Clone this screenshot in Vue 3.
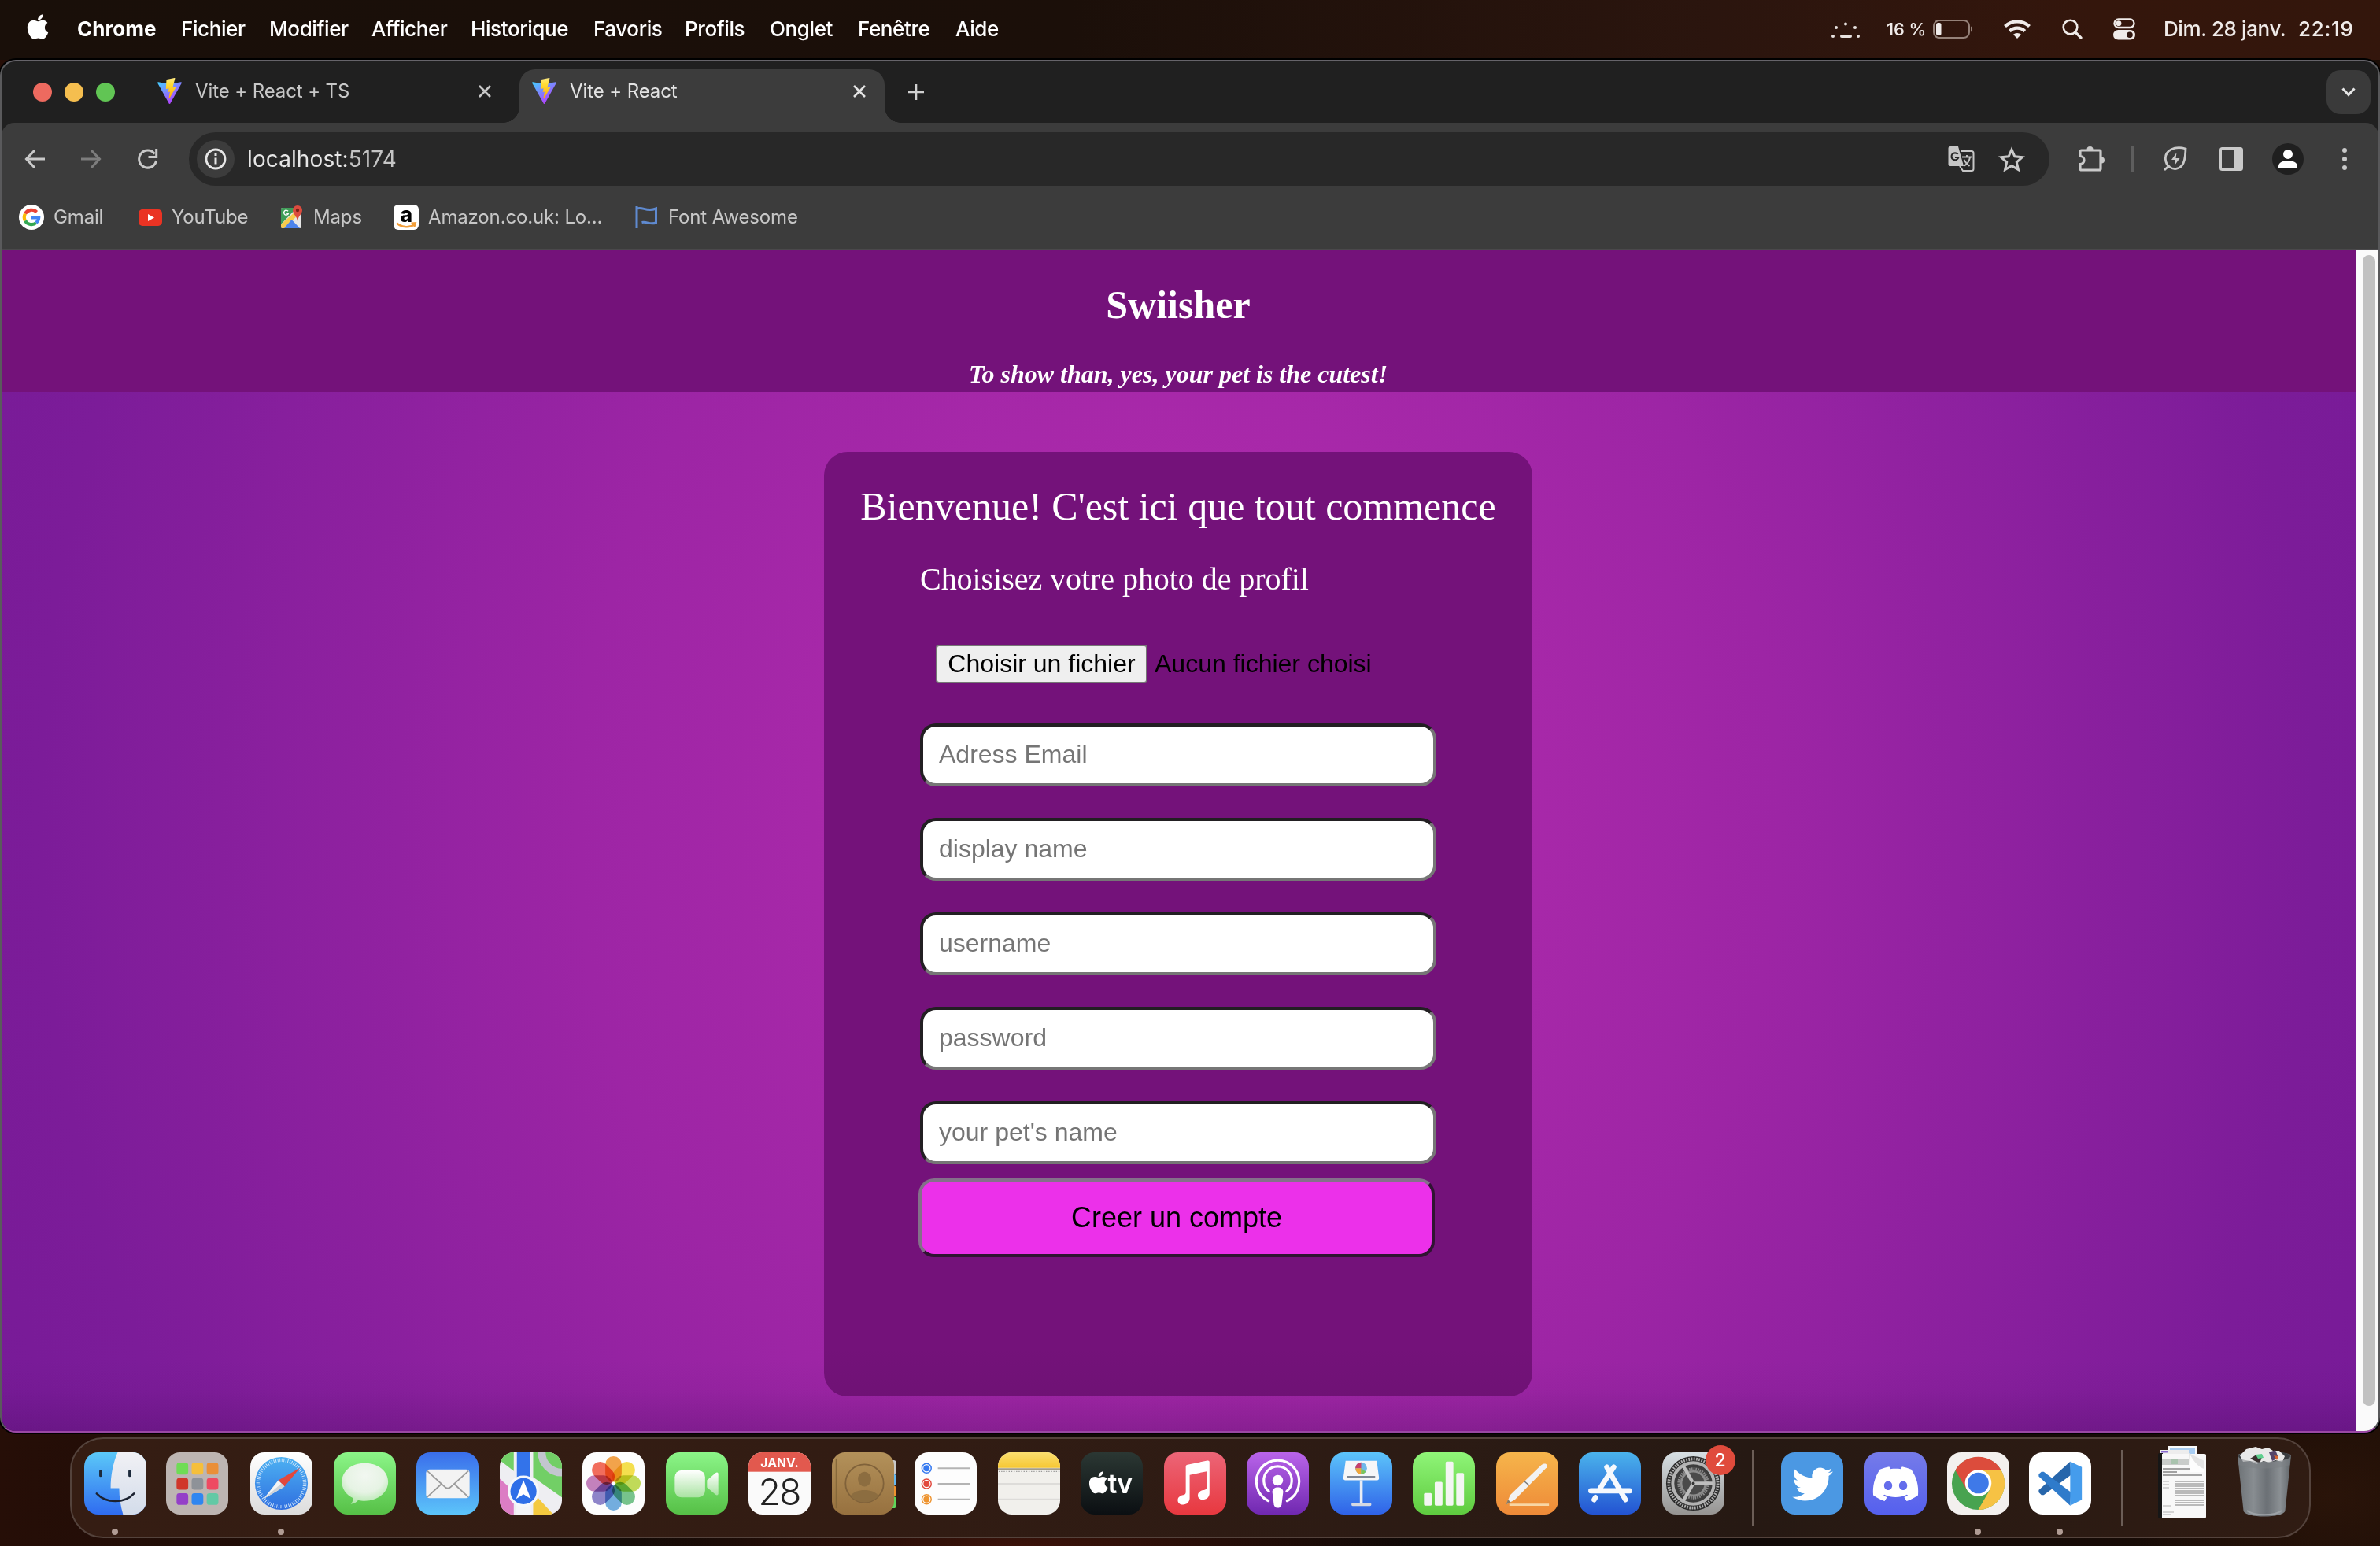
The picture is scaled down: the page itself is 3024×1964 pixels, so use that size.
<script setup>
const menus = [
  { label: 'Chrome', w: 132 },
  { label: 'Fichier', w: 112 },
  { label: 'Modifier', w: 130 },
  { label: 'Afficher', w: 126 },
  { label: 'Historique', w: 156 },
  { label: 'Favoris', w: 116 },
  { label: 'Profils', w: 108 },
  { label: 'Onglet', w: 112 },
  { label: 'Fenêtre', w: 124 },
  { label: 'Aide', w: 60 },
]
const fields = ['Adress Email', 'display name', 'username', 'password', "your pet's name"]
const petals = ['#f0932b', '#f2d92f', '#b5d33c', '#5fb878', '#5b9fd8', '#7a6fc0', '#b86bb0', '#ee5340']
const pads = ['#6fdc55', '#f6bf3a', '#ea8f38', '#d0362a', '#8e9298', '#ee4a62', '#9440c8', '#2f86f0', '#62c9a5']
const docLines = [50, 53, 56, 59, 62, 65, 68, 74, 77, 80]
</script>

<template>
  <div class="desktop">
    <svg class="defs" width="0" height="0">
      <defs>
        <linearGradient id="vite" x1="0" y1="0" x2=".7" y2="1"><stop offset="0" stop-color="#41d1ff" /><stop offset="1" stop-color="#bd34fe" /></linearGradient>
        <linearGradient id="bolt" x1="0" y1="0" x2="0" y2="1"><stop offset="0" stop-color="#ffea83" /><stop offset=".3" stop-color="#ffdd35" /><stop offset="1" stop-color="#ffa800" /></linearGradient>
        <linearGradient id="finder" x1="0" y1="0" x2="0" y2="1"><stop offset="0" stop-color="#5bc8f8" /><stop offset="1" stop-color="#2f6cf0" /></linearGradient>
        <linearGradient id="white" x1="0" y1="0" x2="0" y2="1"><stop offset="0" stop-color="#fff" /><stop offset="1" stop-color="#dcdcdc" /></linearGradient>
        <linearGradient id="face" x1="0" y1="0" x2="0" y2="1"><stop offset="0" stop-color="#f1f1f5" /><stop offset="1" stop-color="#d3dcea" /></linearGradient>
        <linearGradient id="green" x1="0" y1="0" x2="0" y2="1"><stop offset="0" stop-color="#8bf588" /><stop offset="1" stop-color="#56c046" /></linearGradient>
        <linearGradient id="mail" x1="0" y1="0" x2="0" y2="1"><stop offset="0" stop-color="#3a6eeb" /><stop offset="1" stop-color="#5cc4fa" /></linearGradient>
        <linearGradient id="sky" x1="0" y1="0" x2="0" y2="1"><stop offset="0" stop-color="#5cc4fa" /><stop offset="1" stop-color="#2f62e8" /></linearGradient>
        <linearGradient id="compass" x1="0" y1="0" x2="0" y2="1"><stop offset="0" stop-color="#4db1f2" /><stop offset="1" stop-color="#2f6fe0" /></linearGradient>
        <radialGradient id="bubble" cx=".5" cy=".3" r=".7"><stop offset="0" stop-color="#f2f7f1" /><stop offset=".6" stop-color="#e6f3e4" /><stop offset="1" stop-color="#b4e8ae" /></radialGradient>
        <linearGradient id="camera" x1="0" y1="0" x2="0" y2="1"><stop offset="0" stop-color="#fff" /><stop offset="1" stop-color="#a9e3a2" /></linearGradient>
        <linearGradient id="book" x1="0" y1="0" x2="0" y2="1"><stop offset="0" stop-color="#b3915a" /><stop offset="1" stop-color="#97713f" /></linearGradient>
        <linearGradient id="note" x1="0" y1="0" x2="0" y2="1"><stop offset="0" stop-color="#fbdf70" /><stop offset="1" stop-color="#f6c733" /></linearGradient>
        <linearGradient id="tv" x1="0" y1="0" x2="0" y2="1"><stop offset="0" stop-color="#2b3733" /><stop offset="1" stop-color="#0b0f12" /></linearGradient>
        <linearGradient id="music" x1="0" y1="0" x2="0" y2="1"><stop offset="0" stop-color="#ec6577" /><stop offset="1" stop-color="#e8383f" /></linearGradient>
        <linearGradient id="pod" x1="0" y1="0" x2="0" y2="1"><stop offset="0" stop-color="#b964ea" /><stop offset="1" stop-color="#7028b0" /></linearGradient>
        <linearGradient id="num" x1="0" y1="0" x2="0" y2="1"><stop offset="0" stop-color="#8ff578" /><stop offset="1" stop-color="#5fcb3f" /></linearGradient>
        <linearGradient id="pages" x1="0" y1="0" x2="0" y2="1"><stop offset="0" stop-color="#f6b54b" /><stop offset="1" stop-color="#ee8a38" /></linearGradient>
        <linearGradient id="store" x1="0" y1="0" x2="0" y2="1"><stop offset="0" stop-color="#4ab3ec" /><stop offset="1" stop-color="#2353d2" /></linearGradient>
        <linearGradient id="steel" x1="0" y1="0" x2="0" y2="1"><stop offset="0" stop-color="#d7dfe4" /><stop offset="1" stop-color="#969492" /></linearGradient>
        <linearGradient id="disc" x1="0" y1="0" x2="0" y2="1"><stop offset="0" stop-color="#757be9" /><stop offset="1" stop-color="#5560ee" /></linearGradient>
        <linearGradient id="bin" x1="0" y1="0" x2="1" y2="0"><stop offset="0" stop-color="#6d7276" /><stop offset=".3" stop-color="#888d91" /><stop offset=".55" stop-color="#6b7075" /><stop offset=".8" stop-color="#8b9094" /><stop offset="1" stop-color="#5f6468" /></linearGradient>
        <clipPath id="tile"><rect x="0" y="0" width="80" height="80" rx="18" /></clipPath>
        <symbol id="viteLogo" viewBox="0 0 32 32"><path d="M31 6 17 31a1 1 0 0 1-2 0L1 6a1 1 0 0 1 1-1l14 2.500 14-2.500a1 1 0 0 1 1 1z" fill="url(#vite)" /><path d="M22 0 12.500 2a.6.6 0 0 0-.4.500L11.500 13a.5.5 0 0 0 .6.500l3-.6-.9 4.500 2.300-.5-1.500 8c-.1.5.6.8.8.3L23.500 12a.5.5 0 0 0-.5-.7l-3.200.6L22.700.6A.5.5 0 0 0 22 0z" fill="url(#bolt)" /></symbol>
        <symbol id="cross" viewBox="0 0 16 16"><path d="M1 1 15 15M15 1 1 15" stroke="currentColor" stroke-width="2.600" /></symbol>
        <symbol id="apple" viewBox="0 0 384 512"><path fill="#fff" d="M318.700 268.700c-.2-36.700 16.400-64.400 50-84.800-18.800-26.900-47.200-41.700-84.700-44.600-35.500-2.800-74.300 20.700-88.500 20.700-15 0-49.400-19.700-76.400-19.700C63.300 141.200 4 184.800 4 273.500q0 39.300 14.400 81.200c12.800 36.700 59 126.700 107.200 125.200 25.200-.6 43-17.900 75.800-17.900 31.800 0 48.300 17.900 76.400 17.900 48.600-.7 90.400-82.500 102.600-119.300-65.200-30.700-61.700-90-61.700-91.900zm-56.600-164.200c27.300-32.400 24.800-61.900 24-72.500-24.100 1.400-52 16.400-67.900 34.900-17.500 19.800-27.800 44.300-25.600 71.900 26.100 2 49.900-11.400 69.500-34.300z" /></symbol>
      </defs>
    </svg>

    <header class="menubar">
      <svg class="apple" width="32" height="34" viewBox="0 0 32 34"><use href="#apple" x="2" y="-1" width="28" height="36" /></svg>
      <nav class="menus">
        <span v-for="(m, i) in menus" :key="m.label" class="menu" :class="{ strong: i === 0 }" :style="{ width: m.w + 'px' }">{{ m.label }}</span>
      </nav>
      <div class="status">
        <svg class="st-dots" width="38" height="22" viewBox="0 0 38 22" fill="#e8e2df"><circle cx="3" cy="18" r="2" /><circle cx="35" cy="18" r="2" /><circle cx="7" cy="7" r="2" /><circle cx="31" cy="7" r="2" /><circle cx="19" cy="2.500" r="2" /><rect x="12" y="16" width="15" height="4" rx="2" /></svg>
        <span class="pct">16 %</span>
        <svg class="st-bat" width="52" height="24" viewBox="0 0 52 24"><rect x="1" y="1" width="45" height="22" rx="7" fill="none" stroke="#958279" stroke-width="2" /><rect x="4" y="4" width="6.500" height="16" rx="2.500" fill="#f0ecea" /><path d="M48 8.500c2.500 1 2.500 6 0 7z" fill="#958279" /></svg>
        <svg class="st-wifi" width="34" height="26" viewBox="0 0 34 26" fill="none" stroke="#f0ebe9" stroke-width="4.300"><path d="M1.500 9.500a22.500 22.500 0 0 1 31 0" /><path d="M7.300 15.600a14 14 0 0 1 19.400 0" /><path d="M17 25l-5-5.200a7.500 7.500 0 0 1 10 0z" fill="#f0ebe9" stroke="none" /></svg>
        <svg class="st-find" width="26" height="26" viewBox="0 0 26 26" fill="none" stroke="#f0ebe9" stroke-width="2.600"><circle cx="10.500" cy="10.500" r="8.800" /><path d="M17 17l7 7" stroke-width="3.200" stroke-linecap="round" /></svg>
        <svg class="st-cc" width="28" height="28" viewBox="0 0 28 28"><rect x="1.500" y="1.500" width="25" height="10.500" rx="5.250" fill="none" stroke="#f0ebe9" stroke-width="2.400" /><circle cx="7" cy="6.700" r="3.400" fill="#f0ebe9" /><rect x="0" y="15" width="28" height="12.500" rx="6.250" fill="#f0ebe9" /><circle cx="21" cy="21.200" r="3.800" fill="#2f150d" /></svg>
        <span class="date">Dim. 28 janv.</span><span class="time">22:19</span>
      </div>
    </header>

    <main class="window">
      <div class="tabstrip">
        <div class="lights"><i class="r"></i><i class="y"></i><i class="g"></i></div>
        <div class="tab">
          <svg width="33" height="33"><use href="#viteLogo" /></svg>
          <span class="tabname">Vite + React + TS</span>
          <svg class="x" width="16" height="16"><use href="#cross" /></svg>
        </div>
        <div class="tab on">
          <svg width="33" height="33"><use href="#viteLogo" /></svg>
          <span class="tabname">Vite + React</span>
          <svg class="x" width="16" height="16"><use href="#cross" /></svg>
        </div>
        <svg class="plus" width="22" height="22" viewBox="0 0 22 22"><path d="M11 1v20M1 11h20" stroke="#d0d0d0" stroke-width="2.600" /></svg>
        <div class="drop"><svg width="18" height="12" viewBox="0 0 18 12"><path d="M1.500 1.500 9 9.500l7.500-8" fill="none" stroke="#e6e6e6" stroke-width="3" /></svg></div>
      </div>

      <div class="toolbar">
        <div class="nav">
          <svg width="26" height="24" viewBox="0 0 26 24"><path d="M13 1 2.500 12 13 23M3 12h23" fill="none" stroke="#c9c9c9" stroke-width="3" /></svg>
          <svg class="fwd" width="26" height="24" viewBox="0 0 26 24"><path d="M13 1l10.500 11L13 23M23 12H0" fill="none" stroke="#7d7d7d" stroke-width="3" /></svg>
          <svg class="rel" width="28" height="26" viewBox="0 0 28 26"><path d="M22.500 6.500a11 11 0 1 0 2 8.500" fill="none" stroke="#c9c9c9" stroke-width="3" /><path d="M24.700 0v10.500H14.500" fill="none" stroke="#c9c9c9" stroke-width="3" /></svg>
        </div>
        <div class="omni">
          <span class="info"><svg width="28" height="28" viewBox="0 0 28 28"><circle cx="14" cy="14" r="12" fill="none" stroke="#e6e6e6" stroke-width="2.800" /><path d="M14 12.500v8M14 7v3" stroke="#e6e6e6" stroke-width="3" /></svg></span>
          <span class="url">localhost:<em>5174</em></span>
          <svg class="tr" width="34" height="34" viewBox="0 0 34 34"><path d="M17 7h13a2.500 2.500 0 0 1 2.500 2.500v20A2.500 2.500 0 0 1 30 32H19l-4-6" fill="none" stroke="#c6c6c6" stroke-width="2" /><path d="M3 1h10l7 25H3a2.500 2.500 0 0 1-2.500-2.500V3.500A2.500 2.500 0 0 1 3 1z" fill="#c6c6c6" /><path d="M12.500 11A4.500 4.500 0 1 0 13.300 15H9" fill="none" stroke="#282828" stroke-width="2.200" /><path d="M18 14.500h12M24 12v2.500M28 15c-1 5-4 9-8 11M20.500 18c1.500 3 4 6 7 8" fill="none" stroke="#c6c6c6" stroke-width="1.900" /></svg>
          <svg class="star" width="34" height="32" viewBox="0 0 34 32"><path d="M17 4l3.900 8.800 9.600.9-7.200 6.400 2.100 9.400L17 24.600l-8.400 4.900 2.100-9.400-7.200-6.400 9.600-.9z" fill="none" stroke="#c9c9c9" stroke-width="3" /></svg>
        </div>
        <div class="tools">
          <svg class="t1" width="34" height="34" viewBox="0 0 34 34"><path d="M4.500 6h23a1.500 1.500 0 0 1 1.500 1.500v22a1.500 1.500 0 0 1-1.500 1.500h-23A1.500 1.500 0 0 1 3 29.500v-6a5 5 0 0 0 0-10v-6A1.500 1.500 0 0 1 4.500 6z" fill="none" stroke="#c9c9c9" stroke-width="3.200" /><path d="M11.500 5a4 4 0 0 1 8 0zM30 14.500a4 4 0 0 1 0 8z" fill="#c9c9c9" /></svg>
          <i class="tsep"></i>
          <svg class="t2" width="32" height="32" viewBox="0 0 32 32"><path d="M29 3C15-1 2 5 3.500 17c.5 5 3.500 8 5 9 5 4 12 3 16-2 4.500-6 4-14 4.500-21zM8.500 24 2 30" fill="none" stroke="#c9c9c9" stroke-width="2.800" /><path d="M17.500 8 11 17h5l-1 7 6.500-9h-5z" fill="#c9c9c9" /></svg>
          <svg class="t3" width="30" height="30" viewBox="0 0 30 30"><rect x="1.500" y="1.500" width="27" height="27" rx="2" fill="none" stroke="#c9c9c9" stroke-width="3" /><path d="M18 1h9a2 2 0 0 1 2 2v24a2 2 0 0 1-2 2h-9z" fill="#c9c9c9" /></svg>
          <svg class="t4" width="40" height="40" viewBox="0 0 40 40"><circle cx="20" cy="20" r="20" fill="#1f1f1f" /><circle cx="20" cy="14" r="6" fill="#fff" /><path d="M8 32v-3c0-4.500 6-7 12-7s12 2.500 12 7v3z" fill="#fff" /></svg>
          <svg class="t5" width="8" height="30" viewBox="0 0 8 30" fill="#c9c9c9"><circle cx="4" cy="4" r="3" /><circle cx="4" cy="15" r="3" /><circle cx="4" cy="26" r="3" /></svg>
        </div>
      </div>

      <div class="bookmarks">
        <div class="bm b1">
          <svg width="32" height="32" viewBox="0 0 32 32"><circle cx="16" cy="16" r="16" fill="#fff" /><g fill="none" stroke-width="4.200"><path d="M8 11.500A9.300 9.300 0 0 1 22.600 9.400" stroke="#ea4335" /><path d="M8 20.500a9.300 9.300 0 0 1 0-9" stroke="#fbbc05" /><path d="M22 23a9.300 9.300 0 0 1-14-2.500" stroke="#34a853" /><path d="M16 16.500h9.200A9.300 9.300 0 0 1 22 23" stroke="#4285f4" /></g></svg>
          <span>Gmail</span>
        </div>
        <div class="bm b2">
          <svg width="30" height="32" viewBox="0 0 30 32"><rect x="0" y="6" width="30" height="21" rx="5" fill="#ea3323" /><path d="M12 12l8 4.500-8 4.500z" fill="#fff" /></svg>
          <span>YouTube</span>
        </div>
        <div class="bm b3">
          <svg width="30" height="32" viewBox="0 0 30 32"><rect x="1" y="4" width="26" height="26" rx="2" fill="#e6e6e6" /><path d="M1 6a2 2 0 0 1 2-2h18L1 25z" fill="#3f9d58" /><path d="M1 25 20 8l4 4L5 30H3a2 2 0 0 1-2-2z" fill="#f7cb4d" /><path d="M5 30 14.500 19 25 30z" fill="#4c83ec" /><path d="M22 1a6 6 0 0 1 6 6c0 5-5 7-6 14-1-7-6-9-6-14a6 6 0 0 1 6-6z" fill="#dc4b3e" /><circle cx="22" cy="7" r="2.200" fill="#7c2118" /><path d="M10 8.300a3 3 0 1 0 .5 2.700H8" fill="none" stroke="#fff" stroke-width="1.400" /></svg>
          <span>Maps</span>
        </div>
        <div class="bm b4">
          <span class="amz">a<svg width="32" height="32" viewBox="0 0 32 32"><path d="M4 23.500c7 6 17 6 23 1.500" fill="none" stroke="#f19d38" stroke-width="2.600" /><path d="M22.500 23.500l5.500-.3-1.500 5" fill="none" stroke="#f19d38" stroke-width="2" /></svg></span>
          <span>Amazon.co.uk: Lo...</span>
        </div>
        <div class="bm b5">
          <svg width="30" height="32" viewBox="0 0 30 32"><path d="M2 2v28M2 5c8-3 12 5 24.500 0v18c-8 3-11-2-18-.5" fill="none" stroke="#5f8ad0" stroke-width="3" /></svg>
          <span>Font Awesome</span>
        </div>
      </div>

      <div class="viewport">
        <div class="page">
          <header class="site">
            <h2>Swiisher</h2>
            <p>To show than, yes, your pet is the cutest!</p>
          </header>
          <section class="card">
            <h1>Bienvenue! C'est ici que tout commence</h1>
            <div class="form">
              <label class="photo">Choisisez votre photo de profil</label>
              <div class="file"><button class="pick">Choisir un fichier</button><span>Aucun fichier choisi</span></div>
              <input v-for="f in fields" :key="f" class="field" :placeholder="f" />
              <button class="submit">Creer un compte</button>
            </div>
          </section>
        </div>
        <div class="scroll"><i></i></div>
      </div>
    </main>

    <footer class="dock">
      <div class="app run"><svg viewBox="0 0 80 80"><g clip-path="url(#tile)"><rect width="80" height="80" fill="url(#finder)" /><path d="M43 0C37 14 34 30 34 46h11c0 12 2 24 5 34h30V0z" fill="url(#face)" /></g><path d="M21 24v6M58.500 24v6" stroke="#1c2a3c" stroke-width="3.400" stroke-linecap="round" /><path d="M16 53c12 13 36 13 48 0" fill="none" stroke="#1c2230" stroke-width="2.600" stroke-linecap="round" /></svg></div>
      <div class="app pad"><svg viewBox="0 0 80 80"><rect width="80" height="80" rx="18" fill="#bdb5b2" /><rect v-for="(c, i) in pads" :key="i" :x="13.500 + (i % 3) * 19.400" :y="13.500 + Math.floor(i / 3) * 19.600" width="15" height="15" rx="3.500" :fill="c" /></svg></div>
      <div class="app run"><svg viewBox="0 0 80 80"><rect width="80" height="80" rx="18" fill="url(#white)" /><circle cx="40" cy="40" r="34" fill="url(#compass)" /><circle cx="40" cy="40" r="30" fill="none" stroke="#d9ecfb" stroke-width="4.500" stroke-dasharray=".9 1.720" /><path d="M64 20 44 44l-8-8z" fill="#e2483d" /><path d="M17 60 36 36l8 8z" fill="#f4f4f4" /><path d="M17 60 44 44l-4-4z" fill="#cfd3d8" /></svg></div>
      <div class="app"><svg viewBox="0 0 80 80"><rect width="80" height="80" rx="18" fill="url(#green)" /><path d="M40 14c17 0 30 10.500 30 24S57 62.500 40 62.500c-3.500 0-6-.3-8.500-1-2 2.500-5 4.500-9.500 5 2-2 3-4.500 3-7.500C16 54.500 10.500 47.500 10.500 38 10.500 24.500 23 14 40 14z" fill="url(#bubble)" /></svg></div>
      <div class="app"><svg viewBox="0 0 80 80"><rect width="80" height="80" rx="18" fill="url(#mail)" /><rect x="12.500" y="22" width="56" height="37" rx="4.500" fill="#f3f3f3" /><path d="M14 57.500 33 40M67 57.500 48 40M14 24l22 20c3 3 6 3 9 0l22-20" fill="none" stroke="#9b9b9b" stroke-width="1.800" /></svg></div>
      <div class="app"><svg viewBox="0 0 80 80"><g clip-path="url(#tile)"><rect width="80" height="80" fill="#eeeef2" /><path d="M0 0h18v24L0 10z" fill="#72cf66" /><path d="M43 0h37v58L43 32z" fill="#72cf66" /><path d="M0 34l18 16v30H0z" fill="#dc7dc4" /><path d="M43 52l26 28H43z" fill="#f4c93f" /><circle cx="80" cy="0" r="26" fill="none" stroke="#c3c6cf" stroke-width="10" /><path d="M21 0h19v80H21z" fill="#f4f4f7" /><path d="M22 0h17v40H22z" fill="#3373ea" /></g><circle cx="30.500" cy="50" r="18.500" fill="#2f6fe8" stroke="#f5f7fb" stroke-width="3.400" /><path d="M30.500 36 40 60l-9.500-6-9.500 6z" fill="#fff" /></svg></div>
      <div class="app"><svg viewBox="0 0 80 80"><rect width="80" height="80" rx="18" fill="#fdfdfd" /><g class="petals"><rect v-for="(c, i) in petals" :key="i" x="29.500" y="5" width="21" height="33" rx="10.500" :fill="c" fill-opacity=".85" :transform="`rotate(${i * 45} 40 40)`" /></g></svg></div>
      <div class="app"><svg viewBox="0 0 80 80"><rect width="80" height="80" rx="18" fill="url(#green)" /><rect x="11.500" y="23" width="39" height="35" rx="9" fill="url(#camera)" /><path d="M53 36 64 26.500c2-1.500 3.500-.5 3.500 1.500v25c0 2-1.500 3-3.500 1.500L53 45z" fill="url(#camera)" /></svg></div>
      <div class="app"><svg viewBox="0 0 80 80"><g clip-path="url(#tile)"><rect width="80" height="80" fill="#fafafa" /><rect width="80" height="25" fill="#e2594e" /></g><text x="40" y="19.500" text-anchor="middle" class="cal-m">JANV.</text><text x="39.500" y="68" text-anchor="middle" class="cal-d">28</text></svg></div>
      <div class="app"><svg viewBox="0 0 80 80"><rect x="70" y="10" width="12.500" height="18" rx="3" fill="#c9c9c9" /><rect x="70" y="28" width="12.500" height="15" rx="3" fill="#67b9f0" /><rect x="70" y="43" width="12.500" height="14" rx="3" fill="#f0932f" /><rect x="70" y="57" width="12.500" height="15" rx="3" fill="#5fd65a" /><rect width="80" height="80" rx="17" fill="url(#book)" /><path d="M5.500 8v64" stroke="#86683a" stroke-width="1.500" /><circle cx="42" cy="40" r="24.500" fill="none" stroke="#80623a" stroke-width="1.800" /><ellipse cx="42" cy="34.500" rx="8.500" ry="9.500" fill="#8c6d40" /><path d="M24 56c6-10 30-10 36 0-8 11-28 11-36 0z" fill="#8c6d40" /></svg></div>
      <div class="app"><svg viewBox="0 0 80 80"><rect width="80" height="80" rx="18" fill="#fdfdfd" /><g v-for="(c, i) in ['#3478f0', '#e2483d', '#ee9430']" :key="c"><circle cx="15.500" :cy="20.500 + i * 20" r="6" fill="none" :stroke="c" stroke-width="1.500" /><circle cx="15.500" :cy="20.500 + i * 20" r="4" :fill="c" /><path :d="`M30 ${20.500 + i * 20}h41`" stroke="#b4b4b4" stroke-width="1.800" /></g></svg></div>
      <div class="app"><svg viewBox="0 0 80 80"><g clip-path="url(#tile)"><rect width="80" height="80" fill="#f1f0ec" /><rect width="80" height="20" fill="url(#note)" /><path d="M0 21.500h80" stroke="#a39c88" stroke-width="2" /><path d="M1 24.700h79" stroke="#9b9b9b" stroke-width="1.400" stroke-dasharray="1.400 1.800" /><path d="M0 40.500h80M0 60.500h80" stroke="#dddcd9" stroke-width="1.800" /></g></svg></div>
      <div class="app"><svg viewBox="0 0 80 80"><rect width="80" height="80" rx="18" fill="url(#tv)" /><use href="#apple" x="10.500" y="22.500" width="25" height="32.500" /><text x="35" y="53" class="tv">tv</text></svg></div>
      <div class="app"><svg viewBox="0 0 80 80"><rect width="80" height="80" rx="18" fill="url(#music)" /><path d="M28 18.500c0-1.500 1-2.300 2.200-2.600l25.500-5.200c1.800-.3 2.800.4 2.800 2v40c0 5-4 8.300-8.500 8.300-4 0-6.500-2.300-6.500-5.500 0-4 3-6 7-6.800 3.500-.8 4.500-1.500 4.500-4V24.500L33 29v30c0 5-4 8.300-8.500 8.300-4 0-6.800-2.300-6.800-5.600 0-4 3-6 7-6.800 2.500-.6 3.300-1.400 3.300-4z" fill="#fff" /></svg></div>
      <div class="app"><svg viewBox="0 0 80 80"><rect width="80" height="80" rx="18" fill="url(#pod)" /><circle cx="40" cy="36" r="6.800" fill="#fff" /><path d="M33 51c0-8 14-8 14 0l-2 16c-1 6-9 6-10 0z" fill="#fff" /><path d="M28.500 50a18 18 0 1 1 23 0M28 62.500a27.500 27.500 0 1 1 24 0" fill="none" stroke="#fff" stroke-width="3.200" stroke-linecap="round" /></svg></div>
      <div class="app"><svg viewBox="0 0 80 80"><rect width="80" height="80" rx="18" fill="url(#sky)" /><rect x="38.300" y="36" width="3.600" height="31" fill="#e9edf4" /><rect x="27.500" y="65" width="25.500" height="4.200" rx="1.500" fill="#d5d9e2" /><path d="M20 11h40l3 22c0 2-1 3-2.500 3h-41C18 36 17 35 17 33z" fill="#f5f6f8" /><path d="M22 31.300h36" stroke="#7f8795" stroke-width="2" /><circle cx="40" cy="20.500" r="7.500" fill="#6fb8ea" /><path d="M40 20.500V13a7.500 7.500 0 0 0-7.500 7.500z" fill="#c8416b" /><path d="M40 20.500h-7.500A7.500 7.500 0 0 0 40 28z" fill="#f0a63c" /><path d="M40 20.500V28a7.500 7.500 0 0 0 6-3z" fill="#7bc65a" /></svg></div>
      <div class="app"><svg viewBox="0 0 80 80"><rect width="80" height="80" rx="18" fill="url(#num)" /><g fill="#f3f6f2"><rect x="14.500" y="52.500" width="10" height="16" rx="1.600" /><rect x="28.300" y="38" width="10" height="30.500" rx="1.600" /><rect x="42.300" y="12" width="10" height="56.500" rx="1.600" /><rect x="56" y="26.500" width="10" height="42" rx="1.600" /></g></svg></div>
      <div class="app"><svg viewBox="0 0 80 80"><rect width="80" height="80" rx="18" fill="url(#pages)" /><path d="M17 67.500h51" stroke="#f8d6a5" stroke-width="2.600" /><path d="M13 67l5-12L58 16.500c4-3.500 9-2 7 3L24 61z" fill="#f2f2f2" /><path d="M36.500 37.500l6 5" stroke="#777" stroke-width="1.500" /><path d="M13 67l2-6 4 3z" fill="#8a7a62" /></svg></div>
      <div class="app"><svg viewBox="0 0 80 80"><rect width="80" height="80" rx="18" fill="url(#store)" /><g stroke="#f6f9fd" stroke-width="6.600" stroke-linecap="round"><path d="M45 19 27.500 46M36 19l24 42M15.500 49.500h50M21.500 58l-1.800 3" /></g></svg></div>
      <div class="app"><svg viewBox="0 0 80 80"><rect width="80" height="80" rx="18" fill="url(#steel)" /><circle cx="40" cy="40" r="35" fill="#2a2a2a" /><circle cx="40" cy="40" r="31.500" fill="none" stroke="#aeaeae" stroke-width="4" stroke-dasharray="1.800 1.500" /><circle cx="40" cy="40" r="26.500" fill="#3d3d3d" stroke="#b4b4b4" stroke-width="4" /><circle cx="40" cy="40" r="18.500" fill="#555" stroke="#8c8c8c" stroke-width="4" stroke-dasharray="1.600 1.200" /><circle cx="40" cy="40" r="15.500" fill="#4a4a4a" stroke="#8c8c8c" stroke-width="2.500" /><path d="M40 40h26M40 40 27 17.500M40 40 27 62.500" stroke="#bdbdbd" stroke-width="4.400" /><circle cx="40" cy="40" r="2" fill="#333" /></svg><b class="badge">2</b></div>
      <i class="dsep s1"></i>
      <div class="app"><svg viewBox="0 0 80 80"><rect width="80" height="80" rx="18" fill="#4b98e3" /><g transform="translate(14.500 15) scale(2.170)"><path fill="#fff" d="M23.953 4.570a10 10 0 01-2.825.775 4.958 4.958 0 002.163-2.723c-.951.555-2.005.959-3.127 1.184a4.920 4.920 0 00-8.384 4.482C7.690 8.095 4.067 6.130 1.640 3.162a4.822 4.822 0 00-.666 2.475c0 1.710.870 3.213 2.188 4.096a4.904 4.904 0 01-2.228-.616v.060a4.923 4.923 0 003.946 4.827 4.996 4.996 0 01-2.212.085 4.936 4.936 0 004.604 3.417 9.867 9.867 0 01-6.102 2.105c-.390 0-.779-.023-1.170-.067a13.995 13.995 0 007.557 2.209c9.053 0 13.998-7.496 13.998-13.985 0-.210 0-.420-.015-.630A9.935 9.935 0 0024 4.590z" /></g></svg></div>
      <div class="app"><svg viewBox="0 0 80 80"><rect width="80" height="80" rx="18" fill="url(#disc)" /><g transform="translate(11 11.500) scale(2.420)"><path fill="#fff" d="M20.317 4.370a19.791 19.791 0 00-4.885-1.515c-.3.400-.5.900-.687 1.287-1.845-.276-3.680-.276-5.487 0-.2-.45-.4-.9-.696-1.287a19.736 19.736 0 00-4.917 1.543C.533 9.046-.319 13.580.099 18.058c2.084 1.564 4.072 2.479 6.024 3.085.5-.65.950-1.350 1.310-2.022-.7-.3-1.350-.6-1.914-.998l.450-.4c3.928 1.793 8.180 1.793 12.061 0l.450.4c-.6.400-1.250.7-1.920.998.4.750.8 1.400 1.309 2.022 1.961-.607 3.950-1.522 6.034-3.085.5-5.177-.838-9.674-3.586-13.688zM8.020 15.331c-1.183 0-2.157-1.086-2.157-2.419s.956-2.419 2.157-2.419c1.211 0 2.176 1.095 2.157 2.419 0 1.333-.956 2.419-2.157 2.419zm7.975 0c-1.183 0-2.157-1.086-2.157-2.419s.955-2.419 2.157-2.419c1.211 0 2.176 1.095 2.157 2.419 0 1.333-.946 2.419-2.157 2.419z" /></g></svg></div>
      <div class="app run"><svg viewBox="0 0 80 80"><rect width="80" height="80" rx="18" fill="#f3f0ee" /><circle cx="40" cy="40" r="34" fill="#48a350" /><path d="M10.500 23A34 34 0 0 1 69.500 23H40L25.500 48.500z" fill="#dc4c3c" /><path d="M40 23h29.500A34 34 0 0 1 40 74l14.700-25.500z" fill="#f6c244" /><circle cx="40" cy="39.500" r="17" fill="#fff" /><circle cx="40" cy="39.500" r="13.500" fill="#3f79e8" /></svg></div>
      <div class="app run code"><svg viewBox="0 0 80 80"><rect width="80" height="80" rx="18" fill="#fff" /><path d="M53 12 12.500 48.500v3l3.500 3.500h3L54 29z" fill="#2766ab" /><path d="M12.500 28v3L53 68.500l1-17L19 25h-3z" fill="#2f7bcb" /><path d="M53 12 68 19v42L53 68.500z" fill="#459cec" /></svg></div>
      <i class="dsep s2"></i>
      <div class="app docs"><svg viewBox="0 0 64 92"><rect x="13" y="0" width="38" height="20" fill="#fafafa" /><rect x="16" y="3" width="32" height="9" fill="#a9cdf2" /><rect x="4" y="5" width="36" height="20" fill="#ededed" /><rect x="5" y="6" width="8" height="2.500" fill="#8a6ad0" /><path d="M1 11a2 2 0 0 1 2-2h4v83H3a2 2 0 0 1-2-2z" fill="#161616" /><path d="M6 10h54a2 2 0 0 1 2 2v78a2 2 0 0 1-2 2H6z" fill="#f8f8f8" /><rect x="6" y="16" width="34" height="8" fill="#c9ccca" /><rect x="17" y="17" width="9" height="6" fill="#a9c3ae" /><path d="M7 29h36M7 33h18M7 37h50" stroke="#858585" stroke-width="1.500" /><path v-for="y in docLines" :key="y" :d="`M22 ${y - 5}h37`" stroke="#a6a6a6" stroke-width="1.500" /><path d="M7 45h8M7 49h8M7 53h8M7 76h10M7 84h14M7 87h10" stroke="#b0b0b0" stroke-width="1.200" /><path d="M40 9c0 8 2 16 1 24h19V19z" fill="#e4e4e4" /><path d="M41 33h19V29c-8-2-14-10-19-19z" fill="#fdfdfd" /></svg></div>
      <div class="app bin"><svg viewBox="0 0 72 92"><path d="M2 12C2 6 70 6 70 12l-7.500 70c-1 10-52 10-53 0z" fill="url(#bin)" /><ellipse cx="36" cy="13" rx="33" ry="7" fill="#3a3d40" /><path d="M5 12l8-8 12-3 8 3 8-2 6 4 8 0 7 7-3 7-9-2-8 3-7-2-9 4-8-4-9 1z" fill="#e9e9e9" /><path d="M18 16l8-5 7 3-3 8z" fill="#3a3030" /><path d="M25 11l8-1 2 5-7 1z" fill="#5ecf8e" /><path d="M42 8l8-3 4 10-8 4z" fill="#56456a" /><path d="M48 12l6 1-2 5z" fill="#d9642f" /><path d="M2.500 14c8 8 59 8 67 0l-1 10c-15 6-50 6-65 0z" fill="#7b8084" fill-opacity=".5" /><path d="M14 82c8 7 36 7 44 0" fill="none" stroke="#9da2a6" stroke-width="2" /></svg></div>
    </footer>
  </div>
</template>

<style>
html, body { margin: 0; overflow: hidden; }
</style>

<style scoped>
.desktop { width: 3024px; height: 1964px; display: flex; flex-direction: column; overflow: hidden; font-family: Inter, "Liberation Sans", sans-serif;
  background: radial-gradient(260px 160px at 2960px 1900px, #2a1409, transparent), radial-gradient(500px 60px at 1300px 1964px, #3c130a, transparent), linear-gradient(90deg, #260e07, #120a06 30%, #0e0806 70%, #1c0d06); }
.defs { position: absolute; }
svg { display: block; flex: none; }
i { display: block; flex: none; }

.menubar { height: 76px; box-sizing: border-box; padding-bottom: 3px; flex: none; display: flex; align-items: center; color: #fff; font-size: 26px; background: linear-gradient(90deg, #190f09, #1b0f09 45%, #2b150e 72%, #34160c 88%, #33160c); }
.apple { margin-left: 32px; margin-top: -5px; }
.menus { display: flex; margin-left: 34px; font-weight: 500; letter-spacing: -0.4px; }
.menu { white-space: nowrap; flex: none; }
.menu.strong { font-weight: 700; letter-spacing: 0; }
.status { display: flex; align-items: center; margin-left: auto; padding-right: 30px; color: #f0ebe9; font-weight: 500; white-space: nowrap; }
.pct { font-size: 22px; width: 54px; margin-left: 33px; letter-spacing: -.1px; }
.st-dots { margin-top: 4px; }
.st-bat { margin-left: 5px; }
.st-wifi { margin-left: 38px; }
.st-find { margin-left: 40px; }
.st-cc { margin-left: 39px; }
.date { width: 171px; margin-left: 36px; letter-spacing: -.4px; }
.time { width: 74px; letter-spacing: .7px; }

.window { height: 1744px; box-sizing: border-box; flex: none; display: flex; flex-direction: column; border: 2px solid #66646a; border-right-color: #58585a; border-left-color: #5a5a5c; border-bottom-color: #9a48a4; border-radius: 20px; overflow: hidden; background: #202020; box-shadow: 0 0 0 2px #000; }
.tabstrip { height: 78px; flex: none; display: flex; align-items: center; }
.lights { display: flex; gap: 16px; margin-left: 40px; width: 154px; }
.lights i { width: 24px; height: 24px; border-radius: 50%; }
.r { background: #ed6a5f; } .y { background: #f5be4f; } .g { background: #61c554; }
.tab { height: 68px; margin-top: 10px; width: 464px; box-sizing: border-box; padding-left: 3px; display: flex; align-items: center; color: #c7c7c7; font-size: 24px; padding-bottom: 13px; }
.tab.on { background: #3c3c3c; border-radius: 20px 20px 0 0; color: #e3e3e3; margin-left: 0; padding-left: 15px; position: relative; }
.tab.on::before, .tab.on::after { content: ""; position: absolute; bottom: 0; width: 20px; height: 20px; }
.tab.on::before { left: -20px; background: radial-gradient(circle at 0 0, transparent 19.500px, #3c3c3c 20px); }
.tab.on::after { right: -20px; background: radial-gradient(circle at 100% 0, transparent 19.500px, #3c3c3c 20px); }
.tabname { margin-left: 16px; flex: 1; white-space: nowrap; letter-spacing: -.1px; }
.x { margin-right: 36px; }
.tab.on .x { margin-right: 24px; }
.plus { margin-left: 29px; }
.drop { margin-left: auto; margin-right: 10px; width: 56px; height: 56px; border-radius: 18px; background: #3a3a3a; display: flex; align-items: center; justify-content: center; }

.toolbar { height: 92px; flex: none; background: #3c3c3c; border-radius: 16px 16px 0 0; display: flex; align-items: center; }
.nav { width: 238px; display: flex; align-items: center; box-sizing: border-box; padding-left: 29px; }
.fwd { margin-left: 46px; } .rel { margin-left: 45px; }
.omni { width: 2364px; height: 68px; border-radius: 34px; background: #282828; display: flex; align-items: center; }
.info { width: 48px; height: 48px; margin-left: 10px; border-radius: 50%; background: #3c3c3c; display: flex; align-items: center; justify-content: center; }
.url { margin-left: 16px; font-size: 28px; color: #e6e6e6; flex: 1; letter-spacing: .1px; }
.url em { font-style: normal; color: #c4c4c4; }
.tr { margin-right: 30px; } .star { margin-right: 31px; }
.tools { display: flex; align-items: center; }
.t1 { margin-left: 36px; }
.tsep { width: 3px; height: 32px; background: #5e5e5e; margin-left: 34px; }
.t2 { margin-left: 37px; } .t3 { margin-left: 40px; } .t4 { margin-left: 37px; } .t5 { margin-left: 48px; }

.bookmarks { height: 70px; box-sizing: border-box; flex: none; background: #3c3c3c; border-bottom: 2px solid #4a494b; display: flex; align-items: center; color: #c7c7c7; font-size: 24px; padding-left: 22px; padding-bottom: 13px; }
.bm { display: flex; align-items: center; white-space: nowrap; }
.bm span { margin-left: 12px; letter-spacing: -.15px; }
.b1 { width: 152px; } .b2 { width: 180px; } .b3 { width: 144px; } .b4 { width: 307px; }
.bm .amz { position: relative; margin-left: 0; width: 32px; height: 32px; border-radius: 6px; background: #fff; color: #000; font-weight: 800; font-size: 27px; line-height: 25px; text-align: center; }
.amz svg { position: absolute; left: 0; top: 0; }

.viewport { flex: 1; display: flex; min-height: 0; margin: 0 -2px; }
.page { width: 2994px; display: flex; flex-direction: column; align-items: center; font-family: "Liberation Serif", serif; color: #fff;
  background: linear-gradient(180deg, transparent 1410px, rgba(60, 10, 80, .05) 1450px, rgba(60, 10, 80, .24) 1500px), radial-gradient(ellipse 1700px 1950px at 1497px 720px, #ae29ac, #aa29aa 22%, #9d25a5 45%, #7c1c99 85%, #761a97 100%); }
.site { align-self: stretch; height: 180px; box-sizing: border-box; padding-top: 40px; background: #74127a; text-align: center; }
.site h2 { margin: 0; font-size: 50px; line-height: 58px; }
.site p { margin: 41px 0 0; font-size: 32px; line-height: 36px; font-weight: 700; font-style: italic; }
.card { margin-top: 76px; width: 900px; height: 1200px; border-radius: 30px; background: linear-gradient(180deg, #74127a 1140px, #6f1275); }
.card h1 { margin: 40px 0 0; font-weight: 400; font-size: 50px; line-height: 58px; text-align: center; white-space: nowrap; }
.form { margin-left: 122px; width: 656px; display: flex; flex-direction: column; font-family: "Liberation Sans", sans-serif; }
.photo { margin-top: 41px; font-family: "Liberation Serif", serif; font-size: 40px; line-height: 46px; letter-spacing: -.05px; }
.file { margin: 60px 0 51px 20px; height: 49px; display: flex; align-items: center; color: #000; font-size: 32px; }
.pick { width: 269px; height: 49px; box-sizing: border-box; padding: 0 0 1px; border: 2px solid #767676; border-radius: 4px; background: #efefef; font: 32px "Liberation Sans", sans-serif; line-height: 43px; color: #000; white-space: nowrap; }
.file span { margin-left: 9px; }
.field { box-sizing: border-box; width: 656px; height: 80px; margin: 0 0 40px; padding: 0 20px 2px; border: 4px solid; border-color: #221f22 #767676 #767676 #221f22; border-radius: 20px; background: #fff; font: 32px "Liberation Sans", sans-serif; }
.field::placeholder { color: #757575; opacity: 1; }
.submit { margin: -22px 0 0 -2px; width: 656px; height: 100px; box-sizing: border-box; border: 4px solid; border-color: #84708a #2f1432 #2f1432 #84708a; border-radius: 20px; background: #ec30ea; font: 36px "Liberation Sans", sans-serif; color: #000; }
.scroll { width: 30px; box-sizing: border-box; background: #fafafa; padding: 6px 0 0 8px; }
.scroll i { width: 16px; height: 1462px; border-radius: 8px; background: #c1c1c1; }

.dock { margin: 6px 0 0 89px; width: 2847px; height: 128px; flex: none; box-sizing: border-box; border: 2px solid #54433c; border-radius: 42px; background: linear-gradient(90deg, #351d13, #321c13 35%, #2c1b14 60%, #261913 75%, #301c13); display: flex; align-items: flex-start; padding: 17px 0 0 16px; }
.app { width: 79px; height: 80px; margin-right: 26.500px; flex: none; position: relative; }
.app svg { width: 79px; height: 79px; overflow: visible; }
.app.pad { margin-left: -1.500px; margin-right: 28px; }
.app.code { margin-left: -1.500px; margin-right: 28px; }
.run::after { content: ""; position: absolute; left: 35px; top: 97px; width: 8px; height: 8px; border-radius: 50%; background: #b09c94; }
.badge { position: absolute; left: 55px; top: -9px; width: 38px; height: 38px; border-radius: 50%; background: #e04b3c; color: #fff; font-weight: 500; font-size: 23px; line-height: 38px; text-align: center; }
.dsep { width: 2px; height: 96px; background: #6b5d56; margin-top: -3px; }
.s1 { margin-left: 9px; margin-right: 35px; }
.s2 { margin-left: 10px; margin-right: 44px; }
.app.docs { width: 64px; height: 92px; margin: -8px 36px 0 0; }
.app.docs svg { width: 64px; height: 92px; }
.app.bin { width: 72px; height: 92px; margin: -8px 0 0; }
.app.bin svg { width: 72px; height: 92px; }
.petals { isolation: isolate; }
.petals rect { mix-blend-mode: multiply; }
.cal-m { font: 700 16px Inter, sans-serif; fill: #fff; }
.cal-d { font: 300 47px Inter, sans-serif; fill: #222; letter-spacing: -2px; }
.tv { font: 600 34px Inter, sans-serif; fill: #fff; letter-spacing: -1px; }
</style>
